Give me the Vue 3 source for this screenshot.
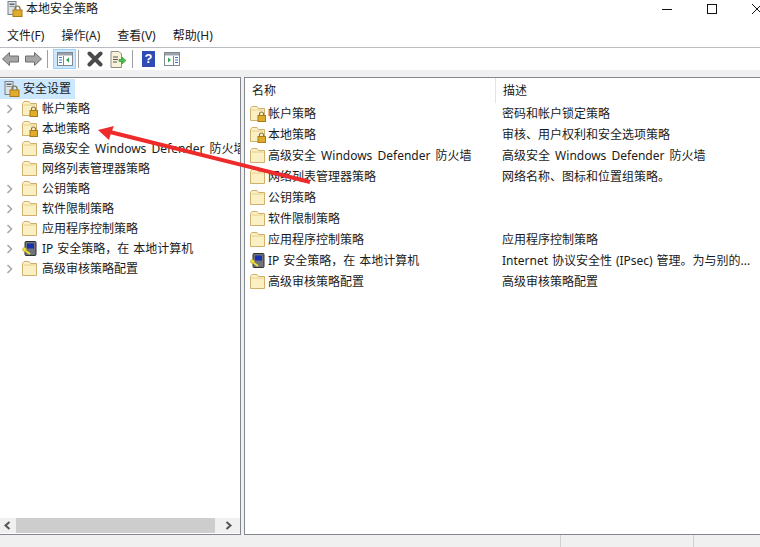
<script setup>
const treeItems = [
  { label: '帐户策略', icon: 'lock', arrow: true },
  { label: '本地策略', icon: 'lock', arrow: true },
  { label: '高级安全 Windows Defender 防火墙', icon: 'folder', arrow: true },
  { label: '网络列表管理器策略', icon: 'folder', arrow: false },
  { label: '公钥策略', icon: 'folder', arrow: true },
  { label: '软件限制策略', icon: 'folder', arrow: true },
  { label: '应用程序控制策略', icon: 'folder', arrow: true },
  { label: 'IP 安全策略，在 本地计算机', icon: 'ip', arrow: true },
  { label: '高级审核策略配置', icon: 'folder', arrow: true },
]
const listItems = [
  { label: '帐户策略', icon: 'lock', desc: '密码和帐户锁定策略' },
  { label: '本地策略', icon: 'lock', desc: '审核、用户权利和安全选项策略' },
  { label: '高级安全 Windows Defender 防火墙', icon: 'folder', desc: '高级安全 Windows Defender 防火墙' },
  { label: '网络列表管理器策略', icon: 'folder', desc: '网络名称、图标和位置组策略。' },
  { label: '公钥策略', icon: 'folder', desc: '' },
  { label: '软件限制策略', icon: 'folder', desc: '' },
  { label: '应用程序控制策略', icon: 'folder', desc: '应用程序控制策略' },
  { label: 'IP 安全策略，在 本地计算机', icon: 'ip', desc: 'Internet 协议安全性 (IPsec) 管理。为与别的...' },
  { label: '高级审核策略配置', icon: 'folder', desc: '高级审核策略配置' },
]
const menus = ['文件(F)', '操作(A)', '查看(V)', '帮助(H)']
</script>

<template>
  <div class="win">
    <header class="title">
      <svg class="ico16" viewBox="0 0 16 16">
        <rect x="1" y="0.5" width="8" height="13" fill="#dfe3e6" stroke="#77808a"/>
        <rect x="2.5" y="2.5" width="5" height="1.5" fill="#5a6670"/>
        <rect x="2.5" y="5" width="5" height="1" fill="#8a949c"/>
        <path d="M8 9V7.5a2.5 2.5 0 0 1 5 0V9" fill="none" stroke="#7d6a3a" stroke-width="1.2"/>
        <rect x="6" y="9" width="9" height="6.5" fill="#e0ac2c" stroke="#a87a18"/>
      </svg>
      <span class="title-text">本地安全策略</span>
      <div class="caps">
        <svg width="12" height="12" viewBox="0 0 12 12"><path d="M1 6.5h10" stroke="#111" fill="none"/></svg>
        <svg width="12" height="12" viewBox="0 0 12 12"><rect x="1.5" y="1.5" width="9" height="9" stroke="#111" fill="none"/></svg>
        <svg width="12" height="12" viewBox="0 0 12 12"><path d="M1 1l10 10M11 1L1 11" stroke="#111" fill="none"/></svg>
      </div>
    </header>

    <nav class="menu">
      <span v-for="m in menus" :key="m">{{ m }}</span>
    </nav>

    <div class="toolbar">
      <svg class="tb back" width="17" height="14" viewBox="0 0 17 14"><path d="M0.500 7L7.500 0.500V4H16.500V10H7.500V13.500z" fill="#a6a6a6" stroke="#6e6e6e"/></svg>
      <svg class="tb fwd" width="17" height="14" viewBox="0 0 17 14"><path d="M16.500 7L9.500 0.500V4H0.500V10H9.500V13.500z" fill="#a6a6a6" stroke="#6e6e6e"/></svg>
      <i class="sep s1"></i>
      <span class="tb-on">
        <svg width="16" height="14" viewBox="0 0 16 14"><rect x="0.500" y="0.500" width="15" height="13" fill="#fff" stroke="#808890"/><rect x="1" y="1" width="14" height="2.500" fill="#9aa3ab"/><path d="M6.500 4v9" stroke="#808890"/><rect x="2" y="5" width="3" height="1" fill="#3a78c8"/><rect x="2" y="7.500" width="3" height="1" fill="#3a78c8"/><rect x="2" y="10" width="3" height="1" fill="#3a78c8"/><path d="M12 5.500v5l-3-2.500z" fill="#2fa84a"/></svg>
      </span>
      <i class="sep s2"></i>
      <svg class="tb del" width="16" height="16" viewBox="0 0 16 16"><path d="M2.500 2.500l11 11M13.500 2.500l-11 11" stroke="#4a4a4a" stroke-width="4" stroke-linecap="round"/></svg>
      <svg class="tb doc" width="16" height="17" viewBox="0 0 16 17"><path d="M1 0.500h8l2.500 2.500v13.500H1z" fill="#f6f1d8" stroke="#8f8f80"/><path d="M3 6h5M3 8.500h5M3 11h4" stroke="#555"/><path d="M9 8.500h3V6l4 3.500-4 3.500v-2.500H9z" fill="#4cc04c" stroke="#2f8f2f" stroke-width="0.600"/></svg>
      <i class="sep s3"></i>
      <span class="help">?</span>
      <svg class="tb view" width="16" height="14" viewBox="0 0 16 14"><rect x="0.500" y="0.500" width="15" height="13" fill="#fff" stroke="#808890"/><rect x="1" y="1" width="14" height="2.500" fill="#9aa3ab"/><path d="M9.500 4v9" stroke="#808890"/><rect x="11" y="5" width="3" height="1" fill="#3a78c8"/><rect x="11" y="7.500" width="3" height="1" fill="#3a78c8"/><rect x="11" y="10" width="3" height="1" fill="#3a78c8"/><path d="M4 5.500v5l3-2.500z" fill="#2fa84a"/></svg>
    </div>

    <main class="panes">
      <section class="tree">
        <div class="tree-body">
          <div class="root">
            <svg class="ico16" viewBox="0 0 16 16">
              <rect x="1" y="0.500" width="8" height="13" fill="#dfe3e6" stroke="#77808a"/>
              <rect x="2.500" y="2.500" width="5" height="1.500" fill="#5a6670"/>
              <rect x="2.500" y="5" width="5" height="1" fill="#8a949c"/>
              <path d="M8 9V7.500a2.500 2.500 0 0 1 5 0V9" fill="none" stroke="#7d6a3a" stroke-width="1.200"/>
              <rect x="6" y="9" width="9" height="6.500" fill="#e0ac2c" stroke="#a87a18"/>
            </svg>
            <span>安全设置</span>
          </div>
          <div v-for="t in treeItems" :key="t.label" class="tree-row">
            <svg class="chev" :class="{ hide: !t.arrow }" width="8" height="10" viewBox="0 0 8 10"><path d="M1.500 1l4 4-4 4" fill="none" stroke="#a6a6a6" stroke-width="1.500"/></svg>
            <svg v-if="t.icon === 'ip'" class="ico16" viewBox="0 0 16 16">
              <rect x="3" y="0.500" width="11" height="14" rx="1" fill="#6f7478" stroke="#2e3336"/>
              <rect x="5" y="2.500" width="7" height="5" fill="#1a2fb0"/>
              <path d="M1 8l7 5" stroke="#f3df3c" stroke-width="2"/>
              <circle cx="2.500" cy="8.500" r="2" fill="#f3df3c" stroke="#a59220" stroke-width="0.500"/>
            </svg>
            <svg v-else class="ico16" viewBox="0 0 16 16">
              <path d="M0.500 2.500v12h14V2.500H8.500L7 0.500H2z" fill="#fbefc4" stroke="#cfb06c"/>
              <path d="M1.500 4h12" stroke="#e8d08e"/>
              <template v-if="t.icon === 'lock'">
                <path d="M9.500 9.500V8a2 2 0 0 1 4 0v1.500" fill="none" stroke="#8a7440" stroke-width="1.100"/>
                <rect x="8" y="9.500" width="7.500" height="6" fill="#e0ac2c" stroke="#a87a18"/>
              </template>
            </svg>
            <span class="nowrap" :class="{ tight: t.icon === 'ip' }">{{ t.label }}</span>
          </div>
        </div>
        <div class="hscroll">
          <svg width="16" height="15" viewBox="0 0 16 15"><path d="M9.500 4l-4 3.500 4 3.500" fill="none" stroke="#555" stroke-width="2"/></svg>
          <div class="thumb"></div>
          <svg width="16" height="15" viewBox="0 0 16 15"><path d="M6.500 4l4 3.500-4 3.500" fill="none" stroke="#555" stroke-width="2"/></svg>
        </div>
      </section>

      <section class="list">
        <div class="list-head">
          <span class="col-name">名称</span>
          <span class="col-desc head-desc">描述</span>
        </div>
        <div v-for="r in listItems" :key="r.label" class="list-row">
          <div class="col-name cell">
            <svg v-if="r.icon === 'ip'" class="ico16" viewBox="0 0 16 16">
              <rect x="3" y="0.500" width="11" height="14" rx="1" fill="#6f7478" stroke="#2e3336"/>
              <rect x="5" y="2.500" width="7" height="5" fill="#1a2fb0"/>
              <path d="M1 8l7 5" stroke="#f3df3c" stroke-width="2"/>
              <circle cx="2.500" cy="8.500" r="2" fill="#f3df3c" stroke="#a59220" stroke-width="0.500"/>
            </svg>
            <svg v-else class="ico16" viewBox="0 0 16 16">
              <path d="M0.500 2.500v12h14V2.500H8.500L7 0.500H2z" fill="#fbefc4" stroke="#cfb06c"/>
              <path d="M1.500 4h12" stroke="#e8d08e"/>
              <template v-if="r.icon === 'lock'">
                <path d="M9.500 9.500V8a2 2 0 0 1 4 0v1.500" fill="none" stroke="#8a7440" stroke-width="1.100"/>
                <rect x="8" y="9.500" width="7.500" height="6" fill="#e0ac2c" stroke="#a87a18"/>
              </template>
            </svg>
            <span class="nowrap" :class="{ tight: r.icon === 'ip' }">{{ r.label }}</span>
          </div>
          <div class="col-desc nowrap" :class="{ tight: r.icon === 'ip' }">{{ r.desc }}</div>
        </div>
      </section>
    </main>

    <footer class="status">
      <i></i><i></i>
    </footer>

    <svg class="red-arrow" width="760" height="547" viewBox="0 0 760 547">
      <path d="M310 182L110 132" stroke="#ee2a2a" stroke-width="4" fill="none"/>
      <path d="M98 130L114 126L111 133L109 140z" fill="#ee2a2a"/>
    </svg>
  </div>
</template>

<style>
html, body { margin: 0; background: #fff; }
</style>

<style scoped>
.win {
  position: relative;
  width: 760px;
  height: 547px;
  overflow: hidden;
  display: flex;
  flex-direction: column;
  background: #f0f0f0;
  color: #1a1a1a;
  font: 12px/16px "Noto Sans", "Noto Sans CJK SC", sans-serif;
  word-spacing: 2px;
}
.tight { word-spacing: 0.8px; }
.title {
  height: 17px;
  background: #fff;
  display: flex;
  align-items: center;
  padding-left: 7px;
  flex: none;
}
.title-text { margin-left: 3px; }
.ico16 { width: 16px; height: 16px; flex: none; }
.caps {
  margin-left: auto;
  margin-right: -3px;
  display: flex;
  gap: 33px;
}
.menu {
  box-sizing: border-box;
  height: 31px;
  padding: 11px 0 0 7px;
  background: #fff;
  border-bottom: 1px solid #b9bcc0;
  display: flex;
  gap: 17px;
  white-space: nowrap;
  flex: none;
}
.toolbar {
  height: 22px;
  background: #fff;
  display: flex;
  align-items: center;
  padding-left: 2px;
  flex: none;
}
.tb { flex: none; }
.fwd { margin-left: 6px; }
.sep { width: 1px; height: 18px; background: #a0a0a0; flex: none; }
.s1 { margin: 0 5px; }
.s2 { margin: 0 8px 0 2px; }
.del { margin-right: 7px; }
.doc { margin-right: 6px; }
.s3 { margin-right: 9px; }
.view { margin-left: 9px; }
.tb-on {
  width: 23px;
  height: 20px;
  box-sizing: border-box;
  background: #cce8ff;
  border: 1px solid #99d1ff;
  display: flex;
  align-items: center;
  justify-content: center;
  flex: none;
}
.help {
  width: 13px;
  height: 16px;
  background: #2f4bb4;
  color: #fff;
  font: bold 13px/16px "Liberation Sans", sans-serif;
  text-align: center;
  flex: none;
}
.panes {
  margin-top: 7px;
  flex: 1;
  display: flex;
  gap: 3px;
  min-height: 0;
}
.tree {
  width: 241px;
  box-sizing: border-box;
  background: #fff;
  border: solid #828790;
  border-width: 1px 1px 1px 0;
  display: flex;
  flex-direction: column;
  flex: none;
}
.tree-body { flex: 1; overflow: hidden; }
.root {
  height: 20px;
  width: 75px;
  margin-top: 1px;
  display: flex;
  align-items: center;
  gap: 3px;
  padding-left: 4px;
  box-sizing: border-box;
  background: #cce8ff;
}
.tree-row {
  height: 20px;
  display: flex;
  align-items: center;
  padding-left: 6px;
  white-space: nowrap;
}
.chev { flex: none; margin-right: 8px; }
.tree-row .ico16 { margin-right: 4px; }
.chev.hide { visibility: hidden; }
.nowrap { white-space: nowrap; }
.hscroll {
  height: 15px;
  margin-bottom: 1px;
  background: #f0f0f0;
  display: flex;
  align-items: center;
  flex: none;
}
.thumb { width: 199px; height: 15px; background: #cdcdcd; }
.hscroll svg:last-child { margin-left: auto; margin-right: 4px; }
.list {
  flex: 1;
  box-sizing: border-box;
  background: #fff;
  border: solid #828790;
  border-width: 1px 0 1px 1px;
}
.list-head {
  height: 25px;
  display: flex;
  align-items: center;
}
.list-row {
  height: 21px;
  display: flex;
  align-items: center;
}
.col-name {
  width: 250px;
  padding-left: 7px;
  box-sizing: border-box;
  flex: none;
}
.cell {
  display: flex;
  align-items: center;
  gap: 2px;
  padding-left: 5px;
}
.col-desc { padding-left: 7px; flex: 1; }
.head-desc {
  border-left: 1px solid #e3e3e3;
  height: 25px;
  line-height: 25px;
}
.status {
  height: 12px;
  flex: none;
  display: flex;
  background: #f0f0f0;
}
.status i {
  width: 1px;
  background: #d0d0d0;
  flex: none;
}
.status i:first-child { margin-left: 560px; }
.status i:last-child { margin-left: 132px; }
.red-arrow { position: absolute; left: 0; top: 0; pointer-events: none; }
</style>
